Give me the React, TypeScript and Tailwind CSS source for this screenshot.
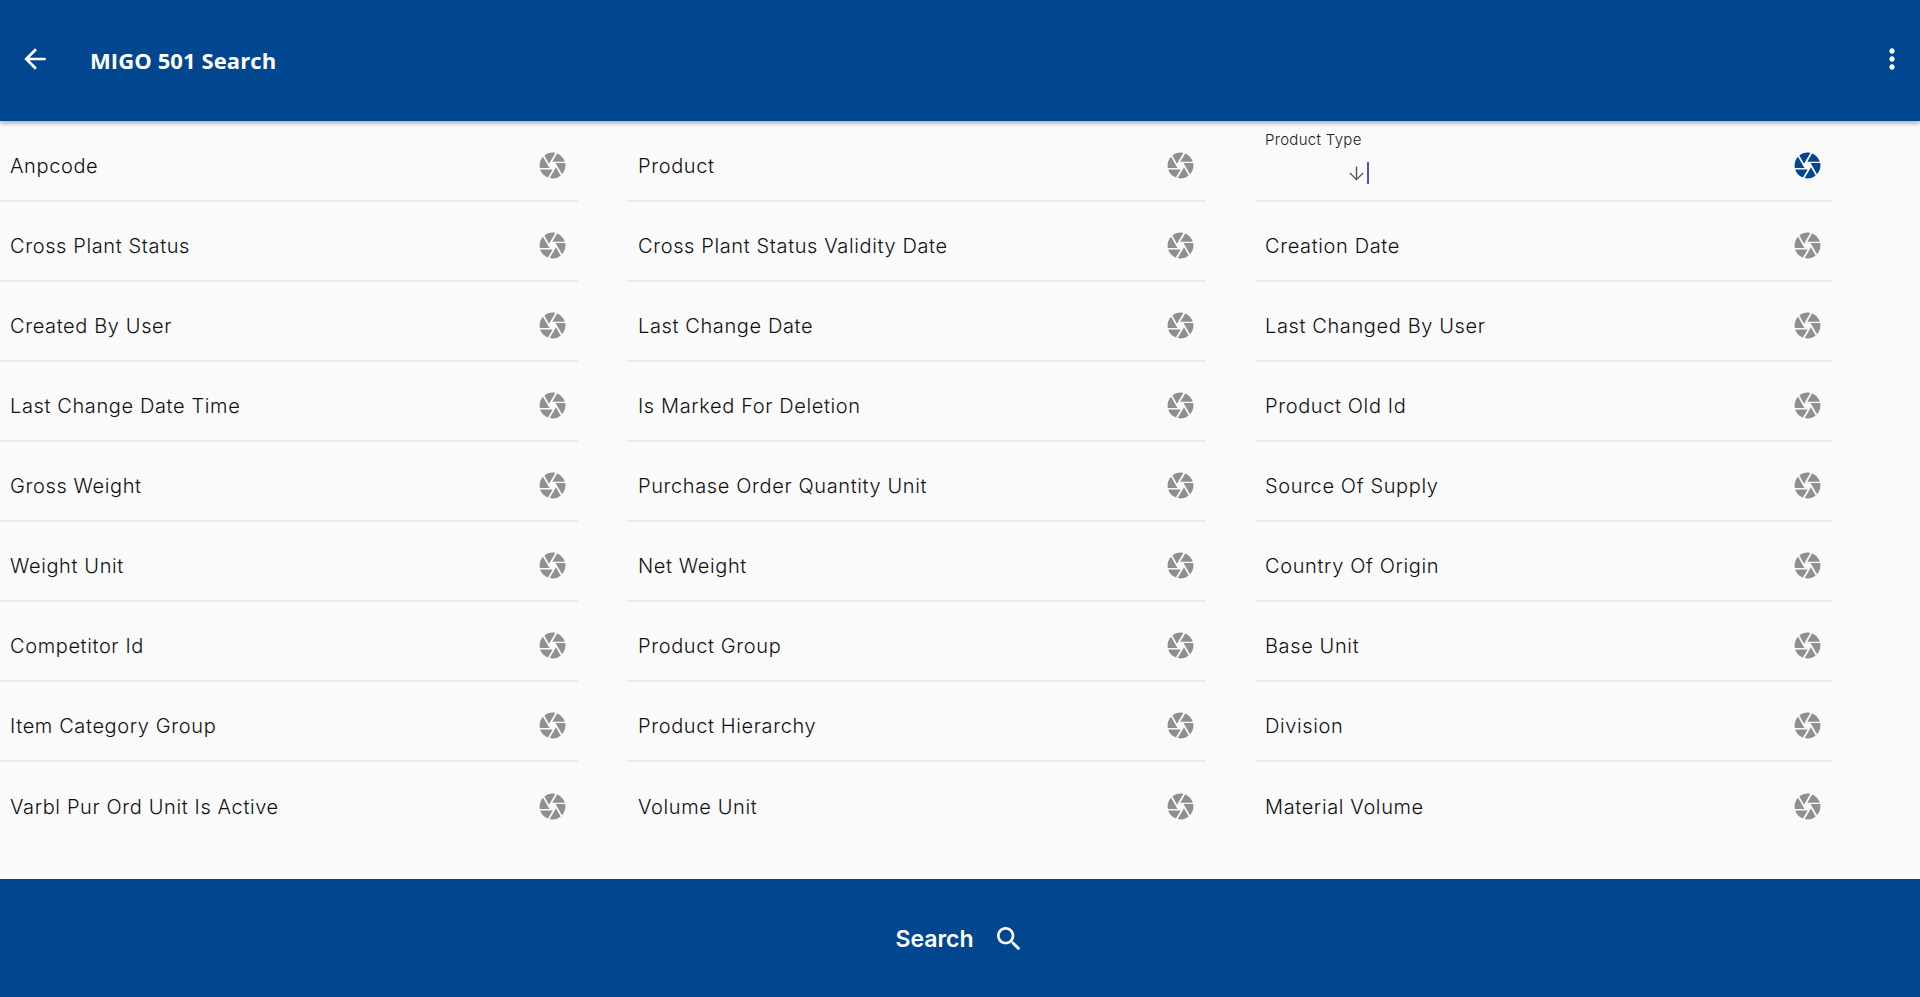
import React from "react";

const ROWS = [
  ["Anpcode", "Product", "Product Type"],
  ["Cross Plant Status", "Cross Plant Status Validity Date", "Creation Date"],
  ["Created By User", "Last Change Date", "Last Changed By User"],
  ["Last Change Date Time", "Is Marked For Deletion", "Product Old Id"],
  ["Gross Weight", "Purchase Order Quantity Unit", "Source Of Supply"],
  ["Weight Unit", "Net Weight", "Country Of Origin"],
  ["Competitor Id", "Product Group", "Base Unit"],
  ["Item Category Group", "Product Hierarchy", "Division"],
  ["Varbl Pur Ord Unit Is Active", "Volume Unit", "Material Volume"],
];

function Camera({ active }: { active?: boolean }) {
  return (
    <svg viewBox="0 0 24 24" className={active ? "w-[31px] h-[31px] fill-[#00478f]" : "w-[31px] h-[31px] fill-[#8f8f8f]"}>
      <path d="M9.4 10.5l4.77-8.26C13.47 2.09 12.75 2 12 2c-2.4 0-4.6.85-6.32 2.25l3.66 6.35.06-.1zM21.54 9c-.92-2.92-3.15-5.26-6-6.34L11.88 9h9.66zm.26 1h-7.49l.29.5 4.76 8.25C21 16.97 22 14.61 22 12c0-.69-.07-1.35-.2-2zM8.54 12l-3.9-6.75C3.01 7.03 2 9.39 2 12c0 .69.07 1.35.2 2h7.49l-1.15-2zm-6.08 3c.92 2.92 3.15 5.26 6 6.34L12.12 15H2.46zm11.27 0l-3.9 6.76c.7.15 1.42.24 2.17.24 2.4 0 4.6-.85 6.32-2.25l-3.66-6.35-.93 1.6z" />
    </svg>
  );
}

function Field({ label, last, col }: { label: string; last: boolean; col: number }) {
  const active = label === "Product Type";
  return (
    <div className={last ? "h-20 pt-[9px] flex items-center justify-between pl-[10px] pr-[10px]" : "h-20 pt-[9px] flex items-center justify-between pl-[10px] pr-[10px] border-b-2 border-[#e9ecef]"}>
      {active ? (
        <div className="self-start -mt-[9px] flex-1">
          <div className="mt-[8px] text-[15px] leading-[20px] font-[350] text-[#222] tracking-[0.3px]">{label}</div>
          <div className="flex items-center ml-[81px] mt-[12px]">
            <svg viewBox="0 0 24 24" className="w-[21px] h-[21px] fill-[#555]">
              <path d="M20 12l-1.1-1.1L12.8 17V4h-1.6v13L5.1 10.9 4 12l8 8 8-8z" />
            </svg>
            <span className="block w-[2px] h-[22px] bg-[#4a55b5]" />
          </div>
        </div>
      ) : (
        <span className={col === 1 ? "ml-[1px] text-[20px] font-[350] text-[#111] tracking-[0.62px]" : "text-[20px] font-[350] text-[#111] tracking-[0.62px]"}>{label}</span>
      )}
      <Camera active={active} />
    </div>
  );
}

export default function App() {
  return (
    <div className="h-[997px] flex flex-col bg-[#fafafa] font-['Inter',sans-serif] overflow-hidden">
      <header className="h-[121px] shrink-0 bg-[#00478f] flex items-center pl-[19px] pr-[12px] shadow-[0_2px_5px_rgba(0,0,0,0.35)] relative z-10">
        <svg viewBox="0 0 24 24" className="w-[32px] h-[32px] fill-white -mt-[3px]">
          <path d="M20 11H7.83l5.59-5.59L12 4l-8 8 8 8 1.41-1.41L7.83 13H20v-2z" />
        </svg>
        <h1 className="ml-[39px] text-[22px] font-bold text-white tracking-[0.1px] font-['Open_Sans',sans-serif]">MIGO 501 Search</h1>
        <svg viewBox="0 0 24 24" className="ml-auto w-[32px] h-[32px] fill-white -mt-[3px]">
          <path d="M12 8c1.1 0 2-.9 2-2s-.9-2-2-2-2 .9-2 2 .9 2 2 2zm0 2c-1.1 0-2 .9-2 2s.9 2 2 2 2-.9 2-2-.9-2-2-2zm0 6c-1.1 0-2 .9-2 2s.9 2 2 2 2-.9 2-2-.9-2-2-2z" />
        </svg>
      </header>
      <main className="flex-1 min-h-0 pt-[1px]">
        <div className="grid grid-cols-[578px_579px_578px] gap-x-[49px]">
          {ROWS.flatMap((row, i) =>
            row.map((label, col) => <Field key={label} label={label} col={col} last={i === ROWS.length - 1} />)
          )}
        </div>
      </main>
      <footer className="h-[118px] shrink-0 bg-[#00478f] pt-[3px] flex items-center justify-center gap-[19px]">
        <span className="text-[23px] font-semibold text-white">Search</span>
        <svg viewBox="0 0 24 24" className="w-[32px] h-[32px] fill-white -mt-[1px]">
          <path d="M15.5 14h-.79l-.28-.27C15.41 12.59 16 11.11 16 9.5 16 5.91 13.09 3 9.5 3S3 5.91 3 9.5 5.91 16 9.5 16c1.61 0 3.09-.59 4.23-1.57l.27.28v.79l5 4.99L20.49 19l-4.99-5zm-6 0C7.01 14 5 11.99 5 9.5S7.01 5 9.5 5 14 7.01 14 9.5 11.99 14 9.5 14z" />
        </svg>
      </footer>
    </div>
  );
}
